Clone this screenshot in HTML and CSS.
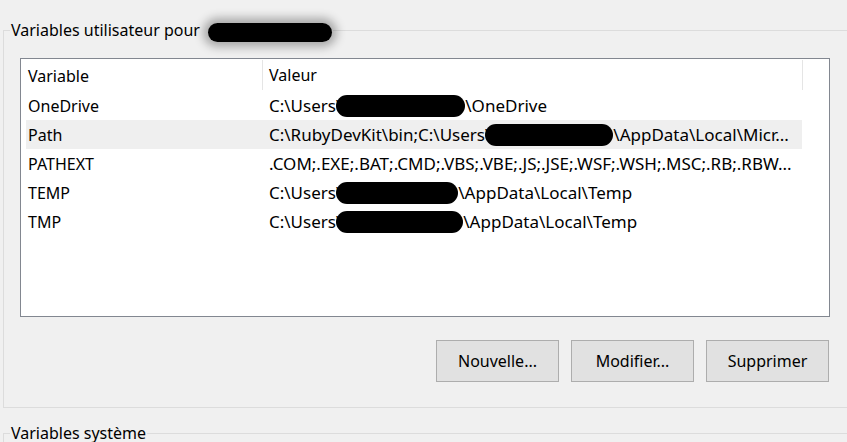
FILE: index.html
```html
<!DOCTYPE html>
<html lang="fr">
<head>
<meta charset="utf-8">
<title>Variables d'environnement</title>
<link rel="stylesheet" href="styles.css">
</head>
<body>
<fieldset class="group">
  <legend class="group-title">Variables utilisateur pour<span class="redact redact-title"></span></legend>
  <div class="panel">
    <div class="listview">
      <div class="lv-header">
        <div class="hcell col-var">Variable</div>
        <div class="hcell col-val">Valeur</div>
        <div class="hcell col-rest"></div>
      </div>
      <div class="lv-row">
        <div class="cell col-var">OneDrive</div>
        <div class="cell col-val value">C:\Users\<span class="redact r-onedrive"></span>\OneDrive</div>
      </div>
      <div class="lv-row selected">
        <div class="cell col-var">Path</div>
        <div class="cell col-val value">C:\RubyDevKit\bin;C:\Users\<span class="redact r-path"></span>\AppData\Local\Micr...</div>
      </div>
      <div class="lv-row">
        <div class="cell col-var">PATHEXT</div>
        <div class="cell col-val value">.COM;.EXE;.BAT;.CMD;.VBS;.VBE;.JS;.JSE;.WSF;.WSH;.MSC;.RB;.RBW...</div>
      </div>
      <div class="lv-row">
        <div class="cell col-var">TEMP</div>
        <div class="cell col-val value">C:\Users\<span class="redact r-temp"></span>\AppData\Local\Temp</div>
      </div>
      <div class="lv-row">
        <div class="cell col-var">TMP</div>
        <div class="cell col-val value">C:\Users\<span class="redact r-tmp"></span>\AppData\Local\Temp</div>
      </div>
    </div>
    <div class="buttons">
      <button class="btn">Nouvelle...</button>
      <button class="btn">Modifier...</button>
      <button class="btn">Supprimer</button>
    </div>
  </div>
</fieldset>
<fieldset class="group group-system">
  <legend class="group-title">Variables système</legend>
</fieldset>
</body>
</html>
```
FILE: styles.css
```css
* { box-sizing: border-box; }
html, body {
  margin: 0;
  background: #f0f0f0;
  overflow: hidden;
}
body {
  width: 847px;
  height: 442px;
  padding: 20px 0 0 3px;
  font-family: "Noto Sans", "Open Sans", sans-serif;
  font-size: 16px;
  color: #000;
}
.group {
  margin: 0;
  width: 880px;
  min-width: 0;
  border: 1px solid #dcdcdc;
  padding: 18px 16px 25px 16px;
}
.group-system {
  margin-top: 15px;
  height: 60px;
}
.group-title {
  height: 20px;
  line-height: 20px;
  padding: 0 1px;
  margin-left: -10px;
  white-space: nowrap;
}
.redact {
  display: inline-block;
  background: #000;
  vertical-align: top;
}
.redact-title {
  width: 124px;
  height: 19px;
  margin-top: 3px;
  margin-left: 8px;
  border-radius: 10px;
  box-shadow: 0 0 10px 5px rgba(0, 0, 0, 0.3);
}
.panel {
  width: 810px;
}
.listview {
  height: 259px;
  border: 1px solid #828790;
  background: #fff;
  padding-left: 5px;
}
.lv-header {
  display: flex;
  height: 32px;
  line-height: 30px;
  padding-top: 2px;
}
.hcell {
  white-space: nowrap;
}
.col-var { width: 236px; padding-left: 2px; flex: none; }
.col-val { width: 540px; padding-left: 7px; flex: none; }
.col-rest { flex: 1; }
.hcell.col-val,
.hcell.col-rest {
  border-left: 1px solid #e5e5e5;
  margin-top: -1px;
  height: 30px;
}
.hcell.col-val { padding-left: 6px; }
.lv-row {
  display: flex;
  height: 29px;
  line-height: 28px;
  padding-top: 1px;
  width: 776px;
}
.lv-row.selected {
  background: #efefef;
}
.cell {
  white-space: nowrap;
}
.value {
  font-size: 17px;
}
.lv-row .redact {
  height: 22px;
  margin-top: 3px;
  border-radius: 11px;
  margin-left: -6px;
}
.r-onedrive { width: 129px; }
.r-path { width: 128px; }
.r-temp { width: 122px; }
.r-tmp { width: 127px; }
.buttons {
  display: flex;
  justify-content: flex-end;
  gap: 12px;
  margin-top: 23px;
  padding-right: 1px;
}
.btn {
  width: 123px;
  height: 42px;
  background: #e1e1e1;
  border: 1px solid #adadad;
  border-radius: 0;
  font: inherit;
  color: #000;
  padding: 0;
}
```
